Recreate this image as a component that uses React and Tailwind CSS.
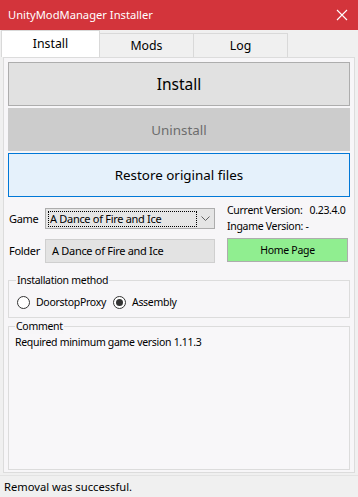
import React from "react";

// ── Small parts ────────────────────────────────────────────────────────────────

function CloseIcon() {
  return (
    <svg width="12" height="12" viewBox="0 0 12 12" fill="none" stroke="white" strokeWidth="1.1">
      <path d="M1 1 L11 11 M11 1 L1 11" />
    </svg>
  );
}

function Chevron() {
  return (
    <svg width="9" height="6" viewBox="0 0 9 6" fill="none" stroke="#606060" strokeWidth="1">
      <path d="M0.5 0.5 L4.5 4.5 L8.5 0.5" />
    </svg>
  );
}

function Radio({ checked, label }) {
  return (
    <div className="flex items-center gap-[6px]">
      <div className="w-[13px] h-[13px] rounded-full border border-[#333] bg-white flex items-center justify-center">
        {checked && <div className="w-[7px] h-[7px] rounded-full bg-[#333]" />}
      </div>
      <span>{label}</span>
    </div>
  );
}

// ── Window ─────────────────────────────────────────────────────────────────────

export default function App() {
  return (
    <div
      className="w-[358px] h-[497px] bg-[#f0f0f0] flex flex-col text-[10.5px] tracking-[-0.3px] leading-[16px] text-black overflow-hidden"
      style={{ fontFamily: '"Noto Sans", "Open Sans", sans-serif' }}
    >
      {/* Title bar */}
      <div className="h-[30px] bg-[#d3343b] flex items-center justify-between pl-[8px] pr-[10px] text-white text-[11.2px] tracking-normal">
        <span>UnityModManager Installer</span>
        <CloseIcon />
      </div>

      {/* Tabs */}
      <div className="h-[27px] flex items-end pl-[1px] tracking-normal">
        <div className="w-[99px] h-[27px] bg-white border border-b-0 border-[#d9d9d9] flex items-center justify-center text-[12.3px]">
          Install
        </div>
        <div className="w-[94px] h-[24px] border border-b-0 border-l-0 border-[#d9d9d9] flex items-center justify-center text-[12.3px]">
          Mods
        </div>
        <div className="w-[94px] h-[24px] border border-b-0 border-l-0 border-[#d9d9d9] flex items-center justify-center text-[12.3px]">
          Log
        </div>
      </div>

      {/* Tab page */}
      <div className="mx-[3px] h-[416px] border border-[#dcdcdc] bg-[#f7f6f8] px-[4px] pt-[4px] flex flex-col">
        <button className="h-[44px] bg-[#e1e1e1] border border-[#adadad] text-[15.5px] tracking-normal">Install</button>
        <button className="mt-[2px] h-[43px] bg-[#cccccc] text-[#6d6d6d] text-[13.4px] tracking-normal">Uninstall</button>
        <button className="mt-[2px] h-[44px] bg-[#e5f1fb] border border-[#0078d7] text-[13.4px] tracking-normal">
          Restore original files
        </button>

        {/* Game / folder grid */}
        <div className="mt-[11px] flex">
          <div className="flex flex-col w-[218px] shrink-0">
            <div className="flex items-center h-[21px]">
              <span className="w-[37px] pl-[1px] text-[11px]">Game</span>
              <div className="w-[170px] h-[21px] border border-[#adadad] bg-[#e5e5e5] flex items-center pl-[2px]">
                <div className="flex-1 h-[16px] border border-dotted border-black flex items-center pl-[1px] whitespace-nowrap text-[11px]">
                  A Dance of Fire and Ice
                </div>
                <div className="w-[17px] flex justify-center">
                  <Chevron />
                </div>
              </div>
            </div>
            <div className="flex items-center h-[24px] mt-[10px]">
              <span className="w-[37px] pl-[1px] text-[11px]">Folder</span>
              <div className="w-[170px] h-[24px] border border-[#cfcfcf] bg-[#e3e3e3] flex items-center pl-[6px] whitespace-nowrap text-[11px]">
                A Dance of Fire and Ice
              </div>
            </div>
          </div>
          <div className="flex flex-col pl-[1px] -mt-[6px] whitespace-nowrap">
            <div>
              Current Version:<span className="ml-[7px]">0.23.4.0</span>
            </div>
            <div>Ingame Version: -</div>
            <div className="mt-[4px] w-[121px] h-[24px] border border-[#adadad] bg-[#90ee90] flex items-center justify-center">
              Home Page
            </div>
          </div>
        </div>

        {/* Installation method */}
        <div className="relative border border-[#dcdcdc] h-[38px] mt-[17px]">
          <span className="absolute -top-[9px] left-[7px] px-[1px] bg-[#f7f6f8]">Installation method</span>
          <div className="flex items-center gap-[7px] pl-[8px] pt-[13px]">
            <Radio label="DoorstopProxy" />
            <Radio checked label="Assembly" />
          </div>
        </div>

        {/* Comment */}
        <div className="relative border border-[#dcdcdc] bg-[#f8f7f9] h-[144px] mt-[8px]">
          <span className="absolute -top-[9px] left-[6px] px-[1px] bg-[#f7f6f8]">Comment</span>
          <div className="pl-[6px] pt-[7px]">Required minimum game version 1.11.3</div>
        </div>
      </div>

      {/* Status bar */}
      <div className="mt-[2px] border-t border-[#e3e3e3] flex-1 flex items-center pl-[4px] text-[11.2px] tracking-normal">
        Removal was successful.
      </div>
    </div>
  );
}
